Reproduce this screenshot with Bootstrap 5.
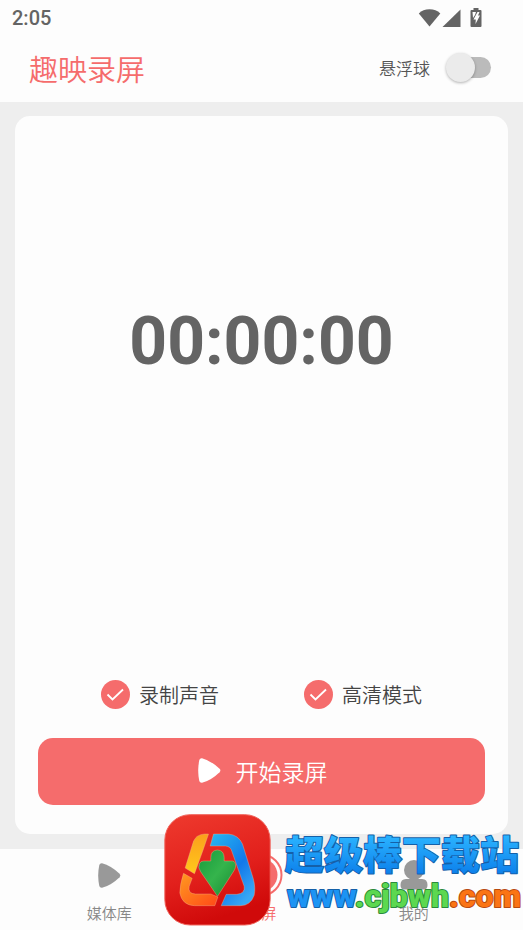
<!DOCTYPE html>
<html lang="zh-CN">
<head>
<meta charset="utf-8">
<meta name="viewport" content="width=device-width, initial-scale=1">
<title>趣映录屏</title>
<link rel="stylesheet" href="https://cdn.jsdelivr.net/npm/bootstrap@5.3.0/dist/css/bootstrap.min.css">
<style>
  :root { --coral: #f56c6c; --ink: #646464; --paper: #fdfdfd; }
  body { font-family: "Noto Sans CJK SC", sans-serif; font-weight: 350; background: #eee; color: #444; }
  svg { display: block; flex: none; }
  .bg-paper { background: var(--paper); }
  .status-bar { height: 36px; padding: 0 41px 0 12px; color: var(--ink); font: 500 20px/36px Roboto, sans-serif; }
  .app-bar { height: 66px; padding: 0 32px 3px 29px; }
  .app-title { font-size: 29px; line-height: 36px; color: var(--coral); font-weight: 350; }
  .float-label { font-size: 17px; line-height: 24px; color: #555; }
  .float-switch { appearance: none; width: 38px; height: 21px; margin: 0 0 0 23px; display: flex; align-items: center;
    background: #bbb; border-radius: 11px; }
  .float-switch::before { content: ""; flex: none; width: 29px; height: 29px; margin-left: -7px; border-radius: 50%;
    background: #ebebeb; box-shadow: 0 1px 3px rgba(0,0,0,.3); }
  .float-switch:checked::before { margin-left: 16px; background: var(--coral); }
  .stage { padding: 14px 15px 15px; }
  .panel { border-radius: 15px; padding: 23px 23px 29px; }
  .timer { font: 700 66px/72px Roboto, sans-serif; color: var(--ink); padding-bottom: 136px; }
  .options { gap: 85px; margin-bottom: 29px; }
  .option { gap: 9px; font-size: 20px; line-height: 29px; }
  .option .form-check-input { width: 29px; height: 29px; margin: 0; border: 0; border-radius: 50%; }
  .option .form-check-input:checked { background: var(--coral)
    url("data:image/svg+xml,%3Csvg xmlns='http://www.w3.org/2000/svg' viewBox='0 0 29 29'%3E%3Cpath d='M6.500 14.500l5 5L22 9.500' fill='none' stroke='white' stroke-width='1.8'/%3E%3C/svg%3E") center / 29px no-repeat; }
  .btn-record { height: 67px; border: 0; border-radius: 15px; background: var(--coral); color: #fff;
    font-size: 23px; line-height: 30px; font-weight: 350; gap: 15px; padding: 4px 11px 6px 13px; }
  .btn-record:hover, .btn-record:active { background: #e85f5f !important; color: #fff !important; }
  .tabs { height: 81px; padding: 4px 33px 0; }
  .tab { color: #888; font-size: 15px; line-height: 32px; }
  .tab.active { color: var(--coral); }
  .tab-icon { height: 44px; }
  .stamp { right: 0; bottom: 4px; pointer-events: none; }
  .stamp-name { font: 900 39px "Noto Sans CJK SC", sans-serif; }
  .stamp-site { font: 900 32px Roboto, sans-serif; }
</style>
</head>
<body>
<div class="d-flex flex-column min-vh-100 position-relative">
  <header class="bg-paper">
    <div class="status-bar d-flex justify-content-between align-items-center">
      <span>2:05</span>
      <svg width="64" height="20" viewBox="0 0 64 20" fill="#646464" aria-hidden="true">
        <path d="M.8 5.5Q5 1.3 11.500 1.300T22.300 5.500L11.500 18.500Z"/>
        <path d="M42.500 1.500V19H24.500Z"/>
        <path d="M55.500 0h5v2h2q1 0 1 1v15q0 1-1 1H53.500q-1 0-1-1V3q0-1 1-1h2z"/>
        <path d="M54.500 4h3.500l-1 3-2 3zM59.500 4h2l-1.500 3.500h2L57.500 16l.3-4.500H55.500z" fill="#fff"/>
      </svg>
    </div>
    <div class="app-bar d-flex justify-content-between align-items-center">
      <h1 class="app-title m-0">趣映录屏</h1>
      <div class="d-flex align-items-center">
        <label class="float-label" for="floatBall">悬浮球</label>
        <input class="float-switch" type="checkbox" role="switch" id="floatBall">
      </div>
    </div>
  </header>

  <main class="stage flex-grow-1 d-flex">
    <section class="panel bg-paper flex-grow-1 d-flex flex-column">
      <div class="timer flex-grow-1 d-flex justify-content-center align-items-center" role="timer">00:00:00</div>
      <div class="options d-flex justify-content-center">
        <div class="option d-flex align-items-center">
          <input class="form-check-input" type="checkbox" id="sound" checked>
          <label for="sound">录制声音</label>
        </div>
        <div class="option d-flex align-items-center">
          <input class="form-check-input" type="checkbox" id="hd" checked>
          <label for="hd">高清模式</label>
        </div>
      </div>
      <button type="button" class="btn btn-record w-100 d-flex justify-content-center align-items-center">
        <svg width="23" height="25" viewBox="0 0 23 25" fill="#fff" aria-hidden="true"><path d="M4 .2Q13 2.500 21.600 10.800Q23.200 12.500 21.600 14.200Q13 22.500 4 24.800Q1.800 25 1.300 23Q-.9 12.500 1.300 2Q1.800 0 4 .2Z"/></svg>
        开始录屏
      </button>
    </section>
  </main>

  <nav class="tabs bg-paper d-flex">
    <a href="#library" class="tab col text-center text-decoration-none">
      <span class="tab-icon d-flex justify-content-center align-items-center">
        <svg width="25" height="25" viewBox="0 0 23 25" fill="#999" aria-hidden="true"><path d="M4 .2Q13 2.500 21.600 10.800Q23.200 12.500 21.600 14.200Q13 22.500 4 24.800Q1.800 25 1.300 23Q-.9 12.500 1.300 2Q1.800 0 4 .2Z"/></svg>
      </span>
      <span class="d-block">媒体库</span>
    </a>
    <a href="#record" class="tab active col text-center text-decoration-none" aria-current="page">
      <span class="tab-icon d-flex justify-content-center align-items-center">
        <svg width="44" height="44" viewBox="0 0 44 44" aria-hidden="true"><circle cx="22" cy="22" r="20.500" fill="none" stroke="#f56c6c" stroke-width="2"/><circle cx="22" cy="22" r="16.500" fill="#f56c6c"/></svg>
      </span>
      <span class="d-block">录屏</span>
    </a>
    <a href="#mine" class="tab col text-center text-decoration-none">
      <span class="tab-icon d-flex justify-content-center align-items-center">
        <svg width="28" height="30" viewBox="0 0 28 30" fill="#999" aria-hidden="true"><circle cx="14" cy="10" r="10"/><path d="M6 19h16q5.500 0 5.500 6 0 4.500-4 4.500H4.500q-4 0-4-4.500 0-6 5.500-6z"/></svg>
      </span>
      <span class="d-block">我的</span>
    </a>
  </nav>

  <div class="stamp position-absolute d-flex">
    <svg width="107" height="112" viewBox="28 28 320 336" aria-hidden="true">
      <defs>
        <linearGradient id="red" x2=".3" y2="1"><stop stop-color="#ee3a2e"/><stop offset=".6" stop-color="#e2201c"/><stop offset="1" stop-color="#d00a0a"/></linearGradient>
        <linearGradient id="yel" x2="0" y2="1"><stop stop-color="#fb9f1c"/><stop offset="1" stop-color="#ffc91c"/></linearGradient>
        <linearGradient id="ora" x2="1" y2="1"><stop stop-color="#ff9a20"/><stop offset="1" stop-color="#ff4a18"/></linearGradient>
        <linearGradient id="blu" x2=".7" y2="1"><stop stop-color="#28b8f0"/><stop offset=".6" stop-color="#1278ea"/><stop offset="1" stop-color="#38a8f5"/></linearGradient>
        <linearGradient id="grn" x2="1" y2="1"><stop stop-color="#169a3c"/><stop offset=".5" stop-color="#35b44c"/><stop offset="1" stop-color="#168a32"/></linearGradient>
      </defs>
      <rect x="30" y="30" width="316" height="331" rx="76" fill="url(#red)" stroke="#f0645c" stroke-width="3"/>
      <g stroke="#f4b08a" stroke-opacity=".6" stroke-width="2">
        <path d="M161 88H149Q124 90 116 110L91 190 119 207 146 132Z" fill="url(#yel)"/>
        <path d="M86 206L112 221 103 245Q98 267 122 268H168L189 277 180 303H119Q82 302 75 265 75 241 86 206Z" fill="url(#ora)"/>
        <path d="M176 88H221Q251 91 263 118L295 221Q303 250 298 272 287 303 257 303H199L214 269H246Q272 266 268 245L231 140Q227 125 212 124H166Z" fill="url(#blu)"/>
        <path d="M168 158Q168 137 188 136 207 137 208 158V169H233Q244 171 242 187 241 193 235 202L188 275 138 202Q128 188 134 177 137 169 147 169H168Z" fill="url(#grn)"/>
      </g>
    </svg>
    <svg width="252" height="112" viewBox="0 0 252 112" role="img" aria-label="超级棒下载站 www.cjbwh.com">
      <defs>
        <linearGradient id="sky" x2="0" y2="1"><stop offset=".2" stop-color="#2bb4ff"/><stop offset="1" stop-color="#0878e8"/></linearGradient>
      </defs>
      <g paint-order="stroke" stroke-linejoin="round" stroke-width="2">
        <text class="stamp-name" x="14" y="55" fill="url(#sky)" stroke="#1560a8">超级棒下载站</text>
        <text class="stamp-site" x="16" y="93"><tspan fill="#1c94f4" stroke="#1560a8">www</tspan><tspan fill="#5cd850" stroke="#2a8a3a">.cjbwh</tspan><tspan fill="#fb7414" stroke="#b84a10">.com</tspan></text>
      </g>
    </svg>
  </div>
</div>
<script src="https://cdn.jsdelivr.net/npm/bootstrap@5.3.0/dist/js/bootstrap.bundle.min.js"></script>
</body>
</html>
